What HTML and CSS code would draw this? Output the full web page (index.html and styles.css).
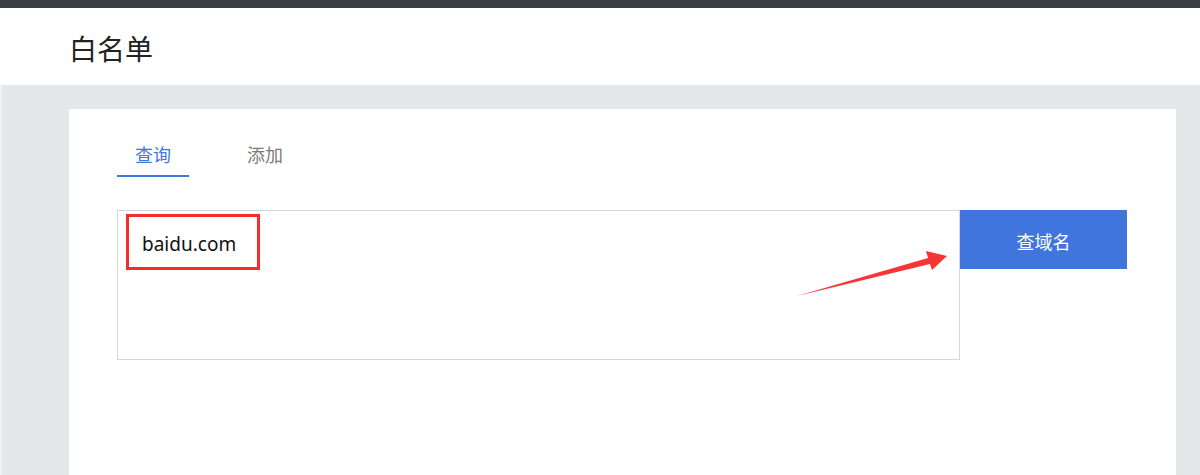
FILE: index.html
```html
<!DOCTYPE html>
<html lang="zh-CN">
<head>
<meta charset="utf-8">
<title>白名单</title>
<link rel="stylesheet" href="styles.css">
</head>
<body>
<div class="topbar"></div>
<header class="header"><h1 class="title">白名单</h1></header>
<main class="main">
  <section class="card">
    <nav class="tabs">
      <div class="tab active">查询</div>
      <div class="tab">添加</div>
    </nav>
    <div class="form-row">
      <div class="input-box">
        <div class="input-text">baidu.com</div>
        <div class="mark-box"></div>
      </div>
      <button class="btn">查域名</button>
      <svg class="arrow" width="842" height="150" viewBox="0 0 842 150">
        <polygon points="680,86 811,48 809,41 830,46 815,60 813,54" fill="#f73535"/>
      </svg>
    </div>
  </section>
</main>
</body>
</html>
```

FILE: styles.css
```css
* { box-sizing: border-box; }
html, body { margin: 0; padding: 0; }
body {
  width: 1200px;
  height: 475px;
  overflow: hidden;
  background: #e6e7eb;
  font-family: "Noto Sans CJK SC", "Noto Sans", sans-serif;
  display: flex;
  flex-direction: column;
}
.topbar {
  height: 8px;
  background: #3b3e45;
}
.header {
  height: 77px;
  background: #fff;
  padding-left: 69px;
  display: flex;
  align-items: center;
}
.title {
  margin: 0;
  font-size: 28px;
  font-weight: 400;
  color: #222;
  line-height: 1;
  padding-top: 2px;
}
.main {
  flex: 1;
  padding: 24px 24px 0 69px;
  display: flex;
  box-shadow: inset 2px 0 0 #eef0f2;
}
.card {
  flex: 1;
  background: #fff;
  padding: 27px 48px 0 48px;
}
.tabs {
  display: flex;
  gap: 40px;
}
.tab {
  width: 72px;
  height: 41px;
  font-size: 18px;
  color: #7a7a7a;
  text-align: center;
  line-height: 37px;
}
.tab.active {
  color: #3e77e0;
  border-bottom: 2px solid #3e77e0;
}
.form-row {
  position: relative;
  margin-top: 33px;
  display: flex;
  align-items: flex-start;
}
.input-box {
  position: relative;
  width: 843px;
  height: 150px;
  border: 1px solid #d6d6d6;
}
.input-text {
  padding: 18px 0 0 24px;
  font-family: "Noto Sans", "Open Sans", sans-serif;
  font-size: 19px;
  color: #111;
  line-height: 30px;
}
.mark-box {
  position: absolute;
  left: 8px;
  top: 3px;
  width: 134px;
  height: 56px;
  border: 3px solid #f62d2d;
}
.btn {
  width: 167px;
  height: 59px;
  border: none;
  background: #4075de;
  color: #fff;
  font-family: "Noto Sans CJK SC", sans-serif;
  font-size: 18px;
  padding: 0;
  padding-top: 3px;
}
.arrow {
  position: absolute;
  left: 0;
  top: 0;
  pointer-events: none;
}
```
